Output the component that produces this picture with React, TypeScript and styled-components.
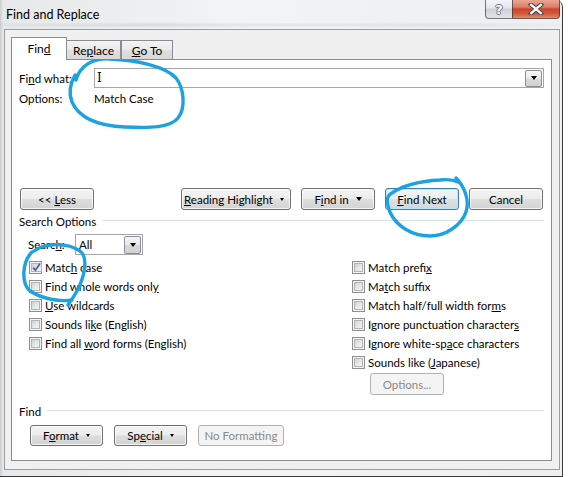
import React from 'react'
import styled, { createGlobalStyle, css } from 'styled-components'

const UI_FONT = `Lato, "Liberation Sans", sans-serif`
const UI_SIZE = '11.5px'

const GlobalStyle = createGlobalStyle`
  html, body {
    margin: 0;
    padding: 0;
    background: #ffffff;
  }
  body {
    font-family: ${UI_FONT};
    font-size: ${UI_SIZE};
    color: #000;
  }
`

const Screen = styled.div`
  position: relative;
  width: 568px;
  height: 477px;
  overflow: hidden;
  background: #ffffff;
`

const Window = styled.div`
  box-sizing: border-box;
  width: 563px;
  height: 477px;
  display: flex;
  flex-direction: column;
  padding: 0 2px 6px 4px;
  border-right: 1px solid #3b3b3b;
  border-bottom: 1px solid #3b3b3b;
  border-top-right-radius: 7px;
  background:
    radial-gradient(ellipse 40% 3px at 28% 25px, rgba(0, 0, 0, 0.09), transparent),
    radial-gradient(ellipse 30% 3px at 75% 25px, rgba(0, 0, 0, 0.07), transparent),
    linear-gradient(90deg, #c9cbcd 0, #e6e8ea 3px, #f2f3f4 40%, #eeeff1 100%);
`

const TitleBar = styled.div`
  height: 29px;
  flex: none;
  display: flex;
  align-items: flex-start;
`

const Title = styled.div`
  padding: 8px 0 0 2px;
  line-height: 14px;
  font-size: 12.5px;
  color: #000;
  flex: 1;
`

const CaptionGroup = styled.div`
  display: flex;
  height: 19px;
`

const captionBase = css`
  height: 19px;
  box-sizing: border-box;
  display: flex;
  align-items: center;
  justify-content: center;
  border: 1px solid rgba(50, 50, 50, 0.65);
  border-top: none;
`

const HelpButton = styled.div`
  ${captionBase}
  width: 27px;
  border-right: none;
  border-bottom-left-radius: 4px;
  background: linear-gradient(#f3f5f8 0%, #e2e6ec 45%, #ccd2da 50%, #dfe3e9 100%);
`

const CloseButton = styled.div`
  ${captionBase}
  width: 48px;
  border-bottom-right-radius: 4px;
  background: linear-gradient(#e9a695 0%, #dc7c64 40%, #c9462d 50%, #d2583d 75%, #e18a6b 100%);
`

const CaptionGlyph = styled.span`
  font-family: "DejaVu Sans", sans-serif;
  font-weight: bold;
  font-size: 13px;
  line-height: 13px;
  color: #ffffff;
  text-shadow: 1px 0 0 #6b6f75, -1px 0 0 #6b6f75, 0 1px 0 #6b6f75, 0 -1px 0 #6b6f75;
`

const Client = styled.div`
  box-sizing: border-box;
  width: 556px;
  height: 441px;
  flex: none;
  padding: 7px 7px 8px 6px;
  border: 1px solid #9c9c9c;
  background: #f0f0f0;
  display: flex;
  flex-direction: column;
`

const TabStrip = styled.div`
  display: flex;
  align-items: flex-end;
  height: 22px;
  position: relative;
  z-index: 1;
`

const Tab = styled.div<{ $active?: boolean; $width: number }>`
  box-sizing: border-box;
  width: ${(p) => p.$width}px;
  display: flex;
  align-items: center;
  justify-content: center;
  white-space: nowrap;
  border: 1px solid #898c95;
  border-bottom: none;
  font-size: 12px;
  ${(p) =>
    p.$active
      ? css`
          height: 23px;
          margin-bottom: -1px;
          background: #ffffff;
          padding-bottom: 2px;
        `
      : css`
          height: 19px;
          background: linear-gradient(#f3f3f3 0%, #ebebeb 45%, #dedede 55%, #d9d9d9 100%);
          padding-top: 1px;
        `}
`

const Panel = styled.div`
  box-sizing: border-box;
  width: 541px;
  height: 402px;
  border: 1px solid #898c95;
  background: #ffffff;
  padding: 8px 7px 0 7px;
  display: flex;
  flex-direction: column;
`

const Key = styled.span`
  text-decoration: underline;
  text-underline-offset: 1px;
`

const FieldRow = styled.div`
  display: flex;
  align-items: center;
  height: 20px;
`

const FieldLabel = styled.div`
  width: 75px;
  flex: none;
  white-space: nowrap;
`

const Combo = styled.div`
  box-sizing: border-box;
  flex: 1;
  height: 20px;
  border: 1px solid #a3a6ad;
  display: flex;
  align-items: center;
  padding: 0 1px 0 2px;
  background: #fff;
`

const ComboText = styled.span`
  flex: 1;
  font-family: "DejaVu Serif", "Liberation Serif", serif;
  font-size: 12px;
`

const DropButton = styled.div<{ $size?: number }>`
  box-sizing: border-box;
  width: 17px;
  height: ${(p) => p.$size ?? 17}px;
  border: 1px solid #8b8f95;
  border-radius: 2px;
  background: linear-gradient(#f6f6f6 0%, #e8e8e8 50%, #dadada 51%, #d1d1d1 100%);
  display: flex;
  align-items: center;
  justify-content: center;
`

const Arrow = styled.span<{ $w?: number }>`
  display: inline-block;
  flex: none;
  width: 0;
  height: 0;
  border-left: ${(p) => (p.$w ?? 7) / 2}px solid transparent;
  border-right: ${(p) => (p.$w ?? 7) / 2}px solid transparent;
  border-top: ${(p) => Math.ceil((p.$w ?? 7) / 2)}px solid #000;
`

const OptionsRow = styled.div`
  display: flex;
  align-items: center;
  height: 15px;
  margin-top: 3px;
`

const ActionRow = styled.div`
  display: flex;
  align-items: center;
  gap: 10px;
  height: 22px;
  margin-top: 82px;
  padding: 0 1px;
`

const Spacer = styled.div`
  flex: 1;
`

const Button = styled.div<{ $width?: number; $primary?: boolean; $disabled?: boolean; $height?: number }>`
  box-sizing: border-box;
  width: ${(p) => p.$width ?? 74}px;
  height: ${(p) => p.$height ?? 22}px;
  flex: none;
  display: flex;
  align-items: center;
  justify-content: center;
  gap: 7px;
  white-space: nowrap;
  border: 1px solid #707070;
  border-radius: 3px;
  font-size: ${UI_SIZE};
  color: #000;
  background: linear-gradient(#f4f4f4 0%, #ececec 48%, #dedede 52%, #d3d3d3 100%);
  box-shadow: inset 0 0 0 1px rgba(255, 255, 255, 0.75);
  ${(p) =>
    p.$primary &&
    css`
      border-color: #3c7fb1;
      box-shadow: inset 0 0 0 1px #b9e6f8;
      background: linear-gradient(#f3f6f8 0%, #eaeef1 48%, #dbe1e5 52%, #d0d8dc 100%);
    `}
  ${(p) =>
    p.$disabled &&
    css`
      border-color: #adb2b5;
      background: #f4f4f4;
      box-shadow: none;
      color: #8a8a8a;
    `}
`

const SplitButton = styled(Button)`
  justify-content: space-between;
  padding: 0 6px 0 2px;
`

const GroupHeading = styled.div<{ $gap?: number }>`
  display: flex;
  align-items: center;
  height: 14px;
  margin-top: ${(p) => p.$gap ?? 0}px;
  gap: 6px;
  white-space: nowrap;
`

const HeadingRule = styled.div`
  flex: 1;
  height: 1px;
  margin-top: -1px;
  background: #d5dfe5;
`

const SearchRow = styled.div`
  display: flex;
  align-items: center;
  height: 21px;
  margin-top: 6px;
  padding-left: 9px;
`

const SearchLabel = styled.div`
  width: 47px;
  white-space: nowrap;
`

const Select = styled.div`
  box-sizing: border-box;
  width: 68px;
  height: 21px;
  border: 1px solid #a3a6ad;
  display: flex;
  align-items: center;
  padding: 0 1px 0 3px;
`

const SelectText = styled.span`
  flex: 1;
`

const CheckGrid = styled.div`
  display: grid;
  grid-template-columns: 323px 1fr;
  margin-top: 3px;
  padding-left: 10px;
`

const CheckColumn = styled.div`
  display: flex;
  flex-direction: column;
`

const CheckRow = styled.div`
  display: flex;
  align-items: center;
  gap: 3px;
  height: 19px;
  white-space: nowrap;
`

const CheckBox = styled.span`
  box-sizing: border-box;
  width: 13px;
  height: 13px;
  flex: none;
  border: 1px solid #8e8f8f;
  padding: 1px;
  background: #f4f4f4;
  display: flex;
`

const CheckInner = styled.span`
  flex: 1;
  display: flex;
  align-items: center;
  justify-content: center;
  border: 1px solid #b2b4b8;
  background: linear-gradient(135deg, #cfd2d7 0%, #e4e6e9 50%, #f4f4f5 100%);
`

const OptionsButtonSlot = styled.div`
  margin: 1px 0 0 18px;
`

const FooterRow = styled.div`
  display: flex;
  align-items: center;
  gap: 11px;
  margin-top: 7px;
  padding-left: 11px;
`

const Annotations = styled.svg`
  position: absolute;
  left: 0;
  top: 0;
  pointer-events: none;
`

type CheckItem = { label: React.ReactNode; checked?: boolean }

const leftChecks: CheckItem[] = [
  { label: <>Matc<Key>h</Key> case</>, checked: true },
  { label: <>Find whole words onl<Key>y</Key></> },
  { label: <><Key>U</Key>se wildcards</> },
  { label: <>Sounds li<Key>k</Key>e (English)</> },
  { label: <>Find all <Key>w</Key>ord forms (English)</> },
]

const rightChecks: CheckItem[] = [
  { label: <>Match prefi<Key>x</Key></> },
  { label: <>Ma<Key>t</Key>ch suffix</> },
  { label: <>Match half/full width for<Key>m</Key>s</> },
  { label: <>Ignore punctuation character<Key>s</Key></> },
  { label: <>Ignore white-sp<Key>a</Key>ce characters</> },
  { label: <>Sounds like (<Key>J</Key>apanese)</> },
]

const Check: React.FC<CheckItem> = ({ label, checked }) => (
  <CheckRow>
    <CheckBox>
      <CheckInner>
        {checked && (
          <svg width="9" height="9" viewBox="0 0 9 9">
            <path d="M1.2 4.6 L3.4 7.2 L7.9 0.8" fill="none" stroke="#4a5d93" strokeWidth="1.7" />
          </svg>
        )}
      </CheckInner>
    </CheckBox>
    <span>{label}</span>
  </CheckRow>
)

const CloseGlyph = () => (
  <svg width="16" height="12" viewBox="0 0 16 12">
    <path d="M3 1.5 L13 10.5 M13 1.5 L3 10.5" stroke="#4b4f55" strokeWidth="4.4" strokeLinecap="square" />
    <path d="M3.2 1.8 L12.8 10.2 M12.8 1.8 L3.2 10.2" stroke="#ffffff" strokeWidth="2.2" strokeLinecap="square" />
  </svg>
)

export default function App() {
  return (
    <Screen>
      <GlobalStyle />
      <Window>
        <TitleBar>
          <Title>Find and Replace</Title>
          <CaptionGroup>
            <HelpButton>
              <CaptionGlyph>?</CaptionGlyph>
            </HelpButton>
            <CloseButton>
              <CloseGlyph />
            </CloseButton>
          </CaptionGroup>
        </TitleBar>

        <Client>
          <TabStrip>
            <Tab $active $width={56}>
              <span>
                Fin<Key>d</Key>
              </span>
            </Tab>
            <Tab $width={55} style={{ marginLeft: -1 }}>
              <span>
                Re<Key>p</Key>lace
              </span>
            </Tab>
            <Tab $width={52}>
              <span>
                <Key>G</Key>o To
              </span>
            </Tab>
          </TabStrip>

          <Panel>
            <FieldRow>
              <FieldLabel>
                Fi<Key>n</Key>d what:
              </FieldLabel>
              <Combo>
                <ComboText>I</ComboText>
                <DropButton>
                  <Arrow $w={7} />
                </DropButton>
              </Combo>
            </FieldRow>
            <OptionsRow>
              <FieldLabel>Options:</FieldLabel>
              <span>Match Case</span>
            </OptionsRow>

            <ActionRow>
              <Button>
                <span>
                  &lt;&lt; <Key>L</Key>ess
                </span>
              </Button>
              <Spacer />
              <SplitButton $width={110}>
                <span>
                  <Key>R</Key>eading Highlight
                </span>
                <Arrow $w={5} />
              </SplitButton>
              <Button>
                <span>
                  F<Key>i</Key>nd in
                </span>
                <Arrow $w={7} />
              </Button>
              <Button $primary>
                <span>
                  <Key>F</Key>ind Next
                </span>
              </Button>
              <Button>
                <span>Cancel</span>
              </Button>
            </ActionRow>

            <GroupHeading $gap={4}>
              <span>Search Options</span>
              <HeadingRule />
            </GroupHeading>

            <SearchRow>
              <SearchLabel>
                Searc<Key>h</Key>:
              </SearchLabel>
              <Select>
                <SelectText>All</SelectText>
                <DropButton $size={18}>
                  <Arrow $w={7} />
                </DropButton>
              </Select>
            </SearchRow>

            <CheckGrid>
              <CheckColumn>
                {leftChecks.map((c, i) => (
                  <Check key={i} {...c} />
                ))}
              </CheckColumn>
              <CheckColumn>
                {rightChecks.map((c, i) => (
                  <Check key={i} {...c} />
                ))}
                <OptionsButtonSlot>
                  <Button $disabled>
                    <span>Options...</span>
                  </Button>
                </OptionsButtonSlot>
              </CheckColumn>
            </CheckGrid>

            <GroupHeading $gap={9}>
              <span>Find</span>
              <HeadingRule />
            </GroupHeading>

            <FooterRow>
              <Button $width={73} $height={21}>
                <span>
                  F<Key>o</Key>rmat
                </span>
                <Arrow $w={5} />
              </Button>
              <Button $width={73} $height={21}>
                <span>
                  Sp<Key>e</Key>cial
                </span>
                <Arrow $w={5} />
              </Button>
              <Button $width={86} $height={21} $disabled>
                <span>No Formatting</span>
              </Button>
            </FooterRow>
          </Panel>
        </Client>
      </Window>

      <Annotations width={568} height={477} viewBox="0 0 568 477">
        <g fill="none" stroke="#1ba2e3" strokeWidth="3.4" strokeLinecap="round" strokeLinejoin="round">
          <path d="M76 80 C80 66, 92 58, 110 59 C135 60, 165 66, 176 78 C184 88, 186 108, 178 118 C170 128, 150 128, 125 127 C100 126, 80 120, 72 102 C68 92, 70 84, 75 75" />
          <path d="M456 178 C464 186, 470 200, 466 212 C461 226, 445 236, 430 236 C412 236, 396 226, 390 212 C386 202, 386 196, 392 193 C402 186, 420 181, 440 180 C448 179, 454 180, 458 182" />
          <path d="M34 251 C46 242, 68 243, 80 251 C89 258, 84 278, 77 291 C73 298, 70 302, 68 305 M72 300 C60 302, 42 299, 30 291 C21 283, 22 262, 32 252" />
        </g>
      </Annotations>
    </Screen>
  )
}
